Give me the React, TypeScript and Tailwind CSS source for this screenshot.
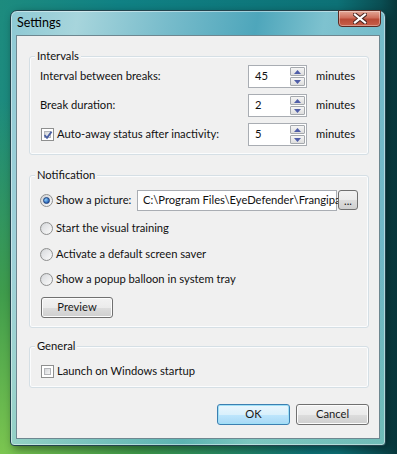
import React from "react";

function Checkbox({ checked = false }: { checked?: boolean }) {
  return (
    <span className="relative w-[13px] h-[13px] border border-[#8e8f8f] bg-white p-[2px] shrink-0">
      <span className="block w-full h-full border border-[#b3b5b9] bg-[linear-gradient(135deg,#d5d7da,#f4f4f4)]" />
      {checked && (
        <svg className="absolute left-[1px] top-[1px]" width="10" height="10" viewBox="0 0 10 10">
          <path d="M1.5 5.2 L4 7.8 L8.6 1.6" fill="none" stroke="#4a5fa3" strokeWidth="1.8" />
        </svg>
      )}
    </span>
  );
}

function Radio({ checked = false }: { checked?: boolean }) {
  return (
    <span className="flex items-center justify-center w-[13px] h-[13px] rounded-full border border-[#8e8f8f] bg-[linear-gradient(135deg,#cfd1d4,#fbfbfb)] shrink-0">
      {checked ? (
        <span className="w-[7px] h-[7px] rounded-full border border-[#1c3f7a] bg-[radial-gradient(circle_at_35%_35%,#8ad0fa,#2a62b8_70%)]" />
      ) : (
        <span className="w-[9px] h-[9px] rounded-full bg-[linear-gradient(135deg,#d9dbde,#f8f8f8)]" />
      )}
    </span>
  );
}

function Button({ label, w, primary = false }: { label: string; w: string; primary?: boolean }) {
  return (
    <button
      className={`${w} h-[21px] rounded-[3px] border flex items-center justify-center text-[#1a1a1a] ${
        primary
          ? "border-[#3c7fb1] bg-[linear-gradient(180deg,#eaf6fd_0%,#d9f0fc_50%,#bee6fd_51%,#a7d9f5_100%)] shadow-[inset_0_0_0_1px_#9fe0f7]"
          : "border-[#707070] bg-[linear-gradient(180deg,#f2f2f2_0%,#ebebeb_50%,#dddddd_51%,#cfcfcf_100%)] shadow-[inset_0_0_0_1px_#fcfcfc]"
      }`}
    >
      {label}
    </button>
  );
}

function Spin({ value }: { value: string }) {
  return (
    <div className="w-[59px] h-[23px] border border-[#a9adb3] bg-white flex items-center justify-between pl-[6px] pr-[1px]">
      <span>{value}</span>
      <div className="flex flex-col gap-[1px] w-[15px]">
        {["up", "down"].map((d) => (
          <div
            key={d}
            className="h-[9px] border border-[#a5a9ae] rounded-[1px] bg-[linear-gradient(180deg,#f5f5f5,#dedede)] flex items-center justify-center"
          >
            <svg width="7" height="4" viewBox="0 0 7 4">
              <path d={d === "up" ? "M0 4 L3.5 0 L7 4 Z" : "M0 0 L3.5 4 L7 0 Z"} fill="#4f5ea8" />
            </svg>
          </div>
        ))}
      </div>
    </div>
  );
}

function Group({ title, className, children }: { title: string; className: string; children: React.ReactNode }) {
  return (
    <div className={`relative border border-[#d5dfe5] rounded-[3px] shadow-[inset_0_0_0_1px_#fbfcfd] ${className}`}>
      <span className="absolute -top-[9px] left-[5px] px-[2px] bg-[#f0f0f0] leading-[16px]">{title}</span>
      {children}
    </div>
  );
}

const INTERVALS = [
  { label: "Interval between breaks:", value: "45" },
  { label: "Break duration:", value: "2" },
  { label: "Auto-away status after inactivity:", value: "5", check: true },
];

const OPTIONS = ["Start the visual training", "Activate a default screen saver", "Show a popup balloon in system tray"];

export default function App() {
  return (
    <div className="w-[397px] h-[454px] overflow-hidden pt-[10px] pl-[10px] text-[11.2px] text-[#111] font-['Segoe_UI','Lato',sans-serif] bg-[radial-gradient(ellipse_at_0%_100%,#7cc650_0%,#3f9c4c_25%,transparent_55%),linear-gradient(90deg,#1d8b7e,#108184_30%,#0d7176_85%,#0a4e53_96%,#08373b)]">
      <div className="w-[376px] h-[436px] rounded-t-[7px] rounded-b-[4px] border border-[#23434d] shadow-[3px_3px_8px_rgba(0,0,0,0.45),inset_0_0_0_1px_rgba(255,255,255,0.45)] bg-[linear-gradient(180deg,transparent_55%,rgba(120,205,160,0.35)),linear-gradient(100deg,#8ec9d4_0%,#a7d5dc_15%,#78bccb_35%,#4ea6bb_55%,#7ec2cf_70%,#6ab3c3_100%)] flex flex-col">
        {/* Title bar */}
        <div className="relative h-[24px] flex items-center pl-[6px]">
          <span className="text-[12.5px] text-black">Settings</span>
          <div className="absolute -top-[1px] right-[4px] w-[43px] h-[17px] rounded-b-[4px] border border-[#5b2a22] bg-[linear-gradient(180deg,#e3a898_0%,#cf6f5c_45%,#b94a36_55%,#c7604a_100%)] shadow-[inset_0_0_0_1px_rgba(255,255,255,0.35)] flex items-center justify-center">
            <svg width="14" height="11" viewBox="0 0 14 11">
              <path d="M2 1.5 L12 9.5 M12 1.5 L2 9.5" stroke="#4a2520" strokeWidth="4.2" strokeLinecap="square" />
              <path d="M2 1.5 L12 9.5 M12 1.5 L2 9.5" stroke="#ffffff" strokeWidth="2.2" strokeLinecap="square" />
            </svg>
          </div>
        </div>

        {/* Client area */}
        <div className="mx-[5px] mb-[6px] flex-1 border border-[#6e8790] bg-[#f0f0f0] pl-[12px] pr-[10px] pt-[20px] flex flex-col">
          <Group title="Intervals" className="pt-[8px] pb-[8px] pl-[10px] flex flex-col gap-[6px]">
            {INTERVALS.map((r) => (
              <div key={r.label} className="h-[23px] flex items-center">
                <div className="w-[208px] flex items-center">
                  {r.check && (
                    <span className="ml-[1px] mr-[3px] flex">
                      <Checkbox checked />
                    </span>
                  )}
                  <span>{r.label}</span>
                </div>
                <Spin value={r.value} />
                <span className="ml-[9px]">minutes</span>
              </div>
            ))}
          </Group>

          <Group title="Notification" className="mt-[20px] pt-[13px] pb-[9px] pl-[10px] flex flex-col">
            <div className="h-[22px] flex items-center">
              <Radio checked />
              <span className="ml-[3px] w-[81px]">Show a picture:</span>
              <div className="w-[200px] h-[21px] border border-[#a9adb3] bg-white flex items-center pl-[5px] whitespace-nowrap">
                C:\Program Files\EyeDefender\Frangipa
              </div>
              <button className="ml-[1px] w-[20px] h-[20px] rounded-[3px] border border-[#707070] bg-[linear-gradient(180deg,#f2f2f2_0%,#ebebeb_50%,#dddddd_51%,#cfcfcf_100%)] flex items-end justify-center pb-[3px] leading-none text-[11px]">
                ...
              </button>
            </div>
            {OPTIONS.map((o, i) => (
              <div key={o} className={`h-[16px] flex items-center ${i === 1 ? "mt-[10px]" : "mt-[9px]"}`}>
                <Radio />
                <span className="ml-[3px]">{o}</span>
              </div>
            ))}
            <div className="mt-[10px] ml-[1px]">
              <Button label="Preview" w="w-[72px]" />
            </div>
          </Group>

          <Group title="General" className="mt-[18px] pt-[16px] pb-[8px] pl-[11px]">
            <div className="h-[16px] flex items-center">
              <Checkbox />
              <span className="ml-[3px]">Launch on Windows startup</span>
            </div>
          </Group>

          <div className="mt-[16px] flex justify-end gap-[6px]">
            <Button label="OK" w="w-[73px]" primary />
            <Button label="Cancel" w="w-[73px]" />
          </div>
        </div>
      </div>
    </div>
  );
}
